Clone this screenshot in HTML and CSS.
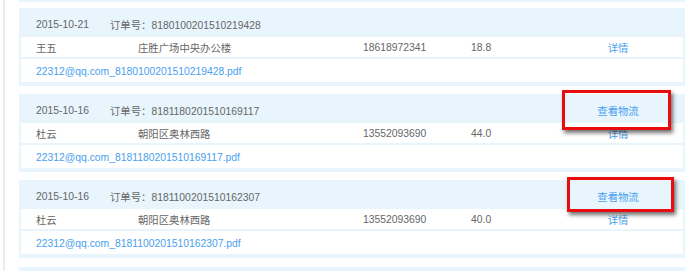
FILE: index.html
```html
<!DOCTYPE html>
<html lang="zh-CN">
<head>
<meta charset="utf-8">
<title>订单列表</title>
<link rel="stylesheet" href="styles.css">
</head>
<body>
<div class="page">
  <div class="list">
    <div class="card-end"></div>

    <div class="card">
      <div class="head"><span class="date">2015-10-21</span><span class="no">订单号：8180100201510219428</span><span class="act"></span></div>
      <div class="row"><span>王五</span><span>庄胜广场中央办公楼</span><span>18618972341</span><span>18.8</span><a class="link center">详情</a></div>
      <div class="row file"><a class="link">22312@qq.com_8180100201510219428.pdf</a></div>
    </div>

    <div class="card">
      <div class="head"><span class="date">2015-10-16</span><span class="no">订单号：8181180201510169117</span><a class="link center act">查看物流</a></div>
      <div class="row"><span>杜云</span><span>朝阳区奥林西路</span><span>13552093690</span><span>44.0</span><a class="link center">详情</a></div>
      <div class="row file"><a class="link">22312@qq.com_8181180201510169117.pdf</a></div>
      <div class="mark mark-a"></div>
    </div>

    <div class="card">
      <div class="head"><span class="date">2015-10-16</span><span class="no">订单号：8181100201510162307</span><a class="link center act">查看物流</a></div>
      <div class="row"><span>杜云</span><span>朝阳区奥林西路</span><span>13552093690</span><span>40.0</span><a class="link center">详情</a></div>
      <div class="row file"><a class="link">22312@qq.com_8181100201510162307.pdf</a></div>
      <div class="mark mark-b"></div>
    </div>

    <div class="card card-start"></div>
  </div>
</div>
</body>
</html>
```

FILE: styles.css
```css
* { box-sizing: border-box; }
html, body { margin: 0; padding: 0; background: #fff; }
body {
  font-family: "Liberation Sans", Arial, "Noto Sans CJK SC", sans-serif;
  font-size: 10.35px;
  color: #666;
  overflow: hidden;
  height: 271px;
}
.page {
  margin-left: 3px;
  border-left: 2px solid #ececec;
  padding-left: 14px;
  padding-right: 14px;
  min-height: 271px;
}
.list {
  display: flex;
  flex-direction: column;
  gap: 8px;
}
.card-end {
  height: 2px;
  margin-bottom: -2px;
  background: #e8f5fd;
}
.card {
  position: relative;
  background: #e8f5fd;
  padding: 0 2px 2px;
  height: 78px;
  display: flex;
  flex-direction: column;
  gap: 2px;
}
.card-start { height: 10px; margin-top: 1px; }
.head {
  height: 29px;
  display: grid;
  grid-template-columns: 74px 1fr 100px;
  align-items: center;
  padding: 3px 15px 0 15px;
  margin-bottom: -2px;
}
.row {
  background: #fff;
  height: 20px;
  display: grid;
  grid-template-columns: 102px 225px 108px 1fr 100px;
  align-items: center;
  padding: 1px 15px 0 15px;
}
.row.file {
  display: flex;
  height: 23px;
}
.link { color: #4a9ff0; text-decoration: none; }
.center { text-align: center; }
.mark {
  position: absolute;
  border: 3px solid #e80c0c;
  box-shadow: 2px 3px 4px rgba(0, 0, 0, 0.55);
}
.mark-a { left: 543px; top: -4px; width: 109px; height: 40px; }
.mark-b { left: 548px; top: -3px; width: 107px; height: 35px; }
```
